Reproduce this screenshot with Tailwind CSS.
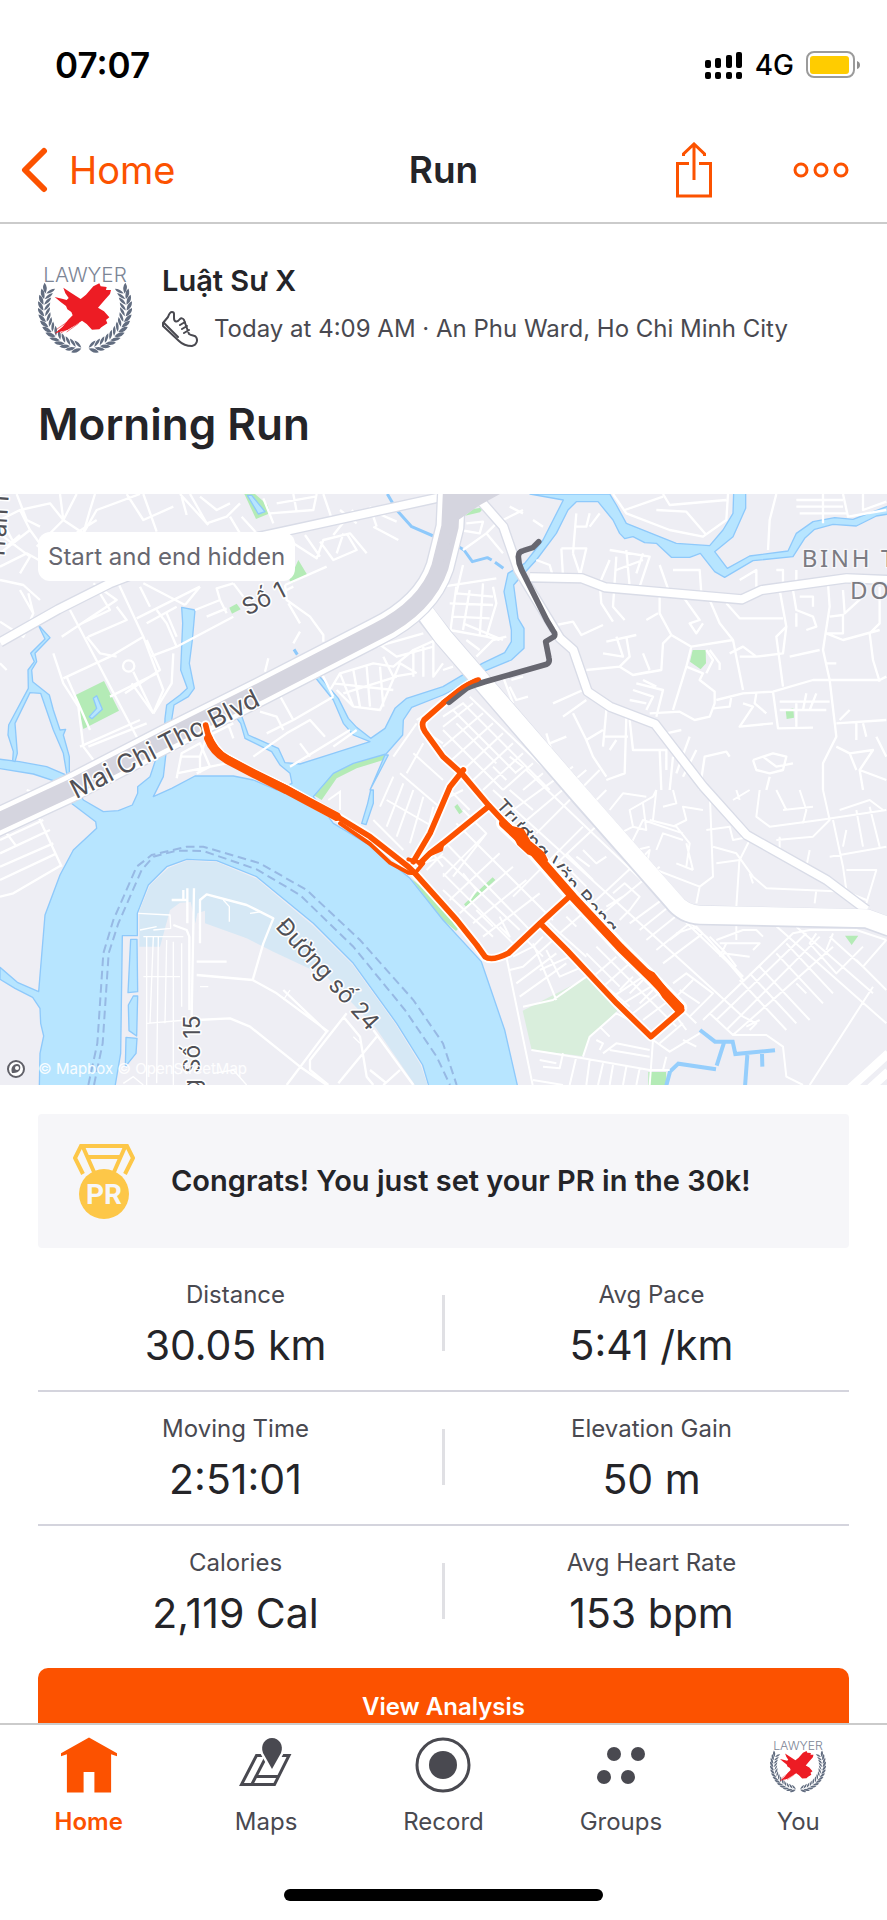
<!DOCTYPE html>
<html lang="en">
<head>
	<meta charset="UTF-8" />
	<meta name="viewport" content="width=device-width, initial-scale=1.0" />
	<title>Run</title>
	<script src="https://cdn.jsdelivr.net/npm/@tailwindcss/browser@4"></script>
</head>
<body class="h-screen flex flex-col overflow-hidden bg-white font-['Inter','Noto_Sans',sans-serif] text-[#242428]">

	<!-- shared shapes -->
	<svg class="hidden" aria-hidden="true">
		<defs>
			<clipPath id="round"><circle cx="165" cy="165" r="141" /></clipPath>
			<path id="leaf" d="M167 288Q150 284 144 268Q160 270 167 288ZM167 290Q158 308 138 304Q146 289 167 290Z" />
			<g id="branch">
				<use href="#leaf" transform="rotate(6 165 165)" />
				<use href="#leaf" transform="rotate(14 165 165)" />
				<use href="#leaf" transform="rotate(22 165 165)" />
				<use href="#leaf" transform="rotate(30 165 165)" />
				<use href="#leaf" transform="rotate(38 165 165)" />
				<use href="#leaf" transform="rotate(46 165 165)" />
				<use href="#leaf" transform="rotate(54 165 165)" />
				<use href="#leaf" transform="rotate(62 165 165)" />
				<use href="#leaf" transform="rotate(70 165 165)" />
				<use href="#leaf" transform="rotate(78 165 165)" />
				<use href="#leaf" transform="rotate(86 165 165)" />
				<use href="#leaf" transform="rotate(94 165 165)" />
				<use href="#leaf" transform="rotate(102 165 165)" />
				<use href="#leaf" transform="rotate(110 165 165)" />
			</g>
			<symbol id="avatar" viewBox="24 24 282 282">
				<g clip-path="url(#round)">
					<text x="165" y="91" text-anchor="middle" font-family="Inter, sans-serif" font-weight="300" font-size="62" fill="#7c8595">LAWYER</text>
				</g>
				<g fill="#626d80">
					<use href="#branch" />
					<use href="#branch" transform="translate(330 0) scale(-1 1)" />
				</g>
				<path fill="#ed1c24" d="M100 107L125 124L152 141L168 128L190 103L208 94L212 103L230 105L228 114L243 114L240 126L222 146L204 167L222 178L238 196L228 204L232 214L214 226L208 232L186 233L170 216L156 206L138 218L112 234L96 238L76 244L98 224L114 204L128 190L124 180L112 172L108 162L92 150L74 135L96 140L110 144L116 138L106 124Z" />
				<path stroke="#ed1c24" stroke-width="3" fill="none" opacity=".6" d="M80 232L120 204M92 243L140 214M110 240L146 214M76 244L112 216" />
			</symbol>
		</defs>
	</svg>

	<!-- status bar -->
	<div class="shrink-0 h-[118px] pt-3 pl-[55px] pr-[27px] flex items-center justify-between text-black">
		<span class="text-[35px] font-semibold">07:07</span>
		<div class="flex items-center gap-3">
			<svg class="w-[38px] h-7" viewBox="0 0 38 28">
				<rect x="0" y="9" width="6" height="8" rx="2" /><rect x="10" y="7" width="6" height="10" rx="2" /><rect x="21" y="4" width="6" height="13" rx="2" /><rect x="31" y="1" width="6" height="16" rx="2" />
				<rect x="0" y="21" width="6" height="7" rx="2" /><rect x="10" y="21" width="6" height="7" rx="2" /><rect x="21" y="21" width="6" height="7" rx="2" /><rect x="31" y="21" width="6" height="7" rx="2" />
			</svg>
			<span class="text-[28px] font-medium leading-7">4G</span>
			<svg class="w-[54px] h-7" viewBox="0 0 54 28">
				<rect x="1" y="1" width="47" height="25" rx="7" fill="none" stroke="#9b9b9b" stroke-width="2" />
				<rect x="4" y="5" width="39" height="18" rx="3" fill="#ffcc00" />
				<path d="M51 10Q54 11 54 14Q54 17 51 18Z" fill="#8f8f8f" />
			</svg>
		</div>
	</div>

	<!-- navigation bar -->
	<header class="shrink-0 h-[106px] px-5 grid grid-cols-3 items-center border-b-2 border-[#cbcbcb]">
		<a href="#" class="flex items-center gap-[21px] text-[38px] text-[#fc5200]">
			<svg class="w-7 h-12" viewBox="0 0 28 48" fill="none" stroke="#fc5200" stroke-width="6" stroke-linecap="round" stroke-linejoin="round"><path d="M24 5L5 24L24 43" /></svg>
			Home
		</a>
		<h1 class="text-center text-[37px] font-semibold">Run</h1>
		<div class="flex items-center justify-end gap-20 pr-[18px]">
			<button type="button" aria-label="Share">
				<svg class="w-[38px] h-14" viewBox="0 0 38 56" fill="none" stroke="#fc5200" stroke-width="3"><path d="M14 21.500H2.500V54H35.500V21.500H24M19 38V3M8.500 14V12L19 2L29.500 12V14" /></svg>
			</button>
			<button type="button" aria-label="More">
				<svg class="w-14 h-4" viewBox="0 0 56 16" fill="none" stroke="#fc5200" stroke-width="3"><circle cx="8" cy="8" r="6" /><circle cx="28" cy="8" r="6" /><circle cx="48" cy="8" r="6" /></svg>
			</button>
		</div>
	</header>

	<main class="flex-1 min-h-0 overflow-hidden">
		<section class="px-[38px] pt-9">
			<div class="flex items-center gap-[30px]">
				<svg class="w-[94px] h-[94px] shrink-0"><use href="#avatar" /></svg>
				<div>
					<p class="text-[29px] leading-8 font-semibold">Luật Sư X</p>
					<div class="mt-3 flex items-center gap-4 text-[24px] leading-10 text-[#494950]">
						<svg class="w-9 h-9" viewBox="0 0 36 36" fill="none" stroke="#494950" stroke-width="2" stroke-linejoin="round" stroke-linecap="round">
							<path d="M10 1C8 1 7 3 6 6L1 12V15L17 30C20 33 24 35 30 35C35 34 36 29 34 26C33 24 30 25 27 23L22 9C21 7 19 7 18 8C15 12 12 11 12 7V3C12 2 11 1 10 1ZM2 12L16 26M18 14L23 11M20 18L25 15M22 22L27 19" />
						</svg>
						<span>Today at 4:09 AM · An Phu Ward, Ho Chi Minh City</span>
					</div>
				</div>
			</div>
			<h2 class="mt-10 pb-10 text-[44px] leading-[60px] font-semibold">Morning Run</h2>
		</section>

		<!-- route map, drawn in four quarters -->
		<div class="relative">
			<svg class="block w-full h-auto" viewBox="0 12 2661 1773" role="img" aria-label="Route map">
				<rect y="12" width="2661" height="1773" fill="#eeeef4" />

				<!-- parks -->
				<g fill="#b4ebb6">
					<path d="M733 12H765L803 45L810 70L768 87ZM895 210L922 255L875 280L868 270ZM688 353L710 341L722 358L696 371ZM227 615L312 573L357 662L250 717ZM1160 790L1060 820L1000 850L940 915L965 930L1010 865L1070 835L1150 810Z" />
					<path d="M1395 77L1420 57L1452 52L1440 67ZM2078 480H2117L2118 520L2102 538L2070 515ZM2357 660L2380 655L2382 683L2360 687Z" />
					<path d="M1363 950L1372 942L1388 965L1378 973ZM1392 1243L1478 1162L1486 1170L1398 1250ZM2535 1337H2575L2555 1365ZM1945 1746H1998L2000 1785H1945Z" />
					<path d="M1232 1165L1258 1185L1380 1310L1368 1323L1329 1290Z" />
				</g>
				<path fill="#d9eedc" d="M1568 1562L1765 1461L1852 1562L1770 1640L1750 1699L1595 1680Z" />

				<!-- water -->
				<g fill="#b7e5ff" stroke="#8ec9fb" stroke-width="4" stroke-linejoin="round">
					<path d="M118 1790L120 1690L131 1638L122 1600L120 1555L98 1522L45 1495L0 1468V1432L52 1477L116 1505L135 1275L180 1155L220 1080L290 1015L287 995L212 938L185 880L100 852L-5 835V807L58 815L140 830L210 860L250 930L310 965L355 962L397 945L413 910L413 890L450 860L470 800L493 760L495 685L500 645L540 615L562 595L542 540L548 400L545 352L585 360L577 450L568 520L583 595L565 620L522 645L515 690L498 790L490 860L460 920L515 895L585 858H700L760 870L830 900L876 880L870 850L840 825L815 785L735 745L722 700L708 682L725 678L745 735L835 775L855 818L900 822L1000 790L1110 755L1060 735L1030 700L1000 630L940 555L955 555L1015 625L1045 685L1070 712L1112 745L1155 715L1185 655L1220 625L1329 590L1447 520L1514 488L1534 455V420L1512 305L1524 250L1574 220L1629 150L1690 30L1590 12H1829L1849 45L1879 100L2029 160L2129 167L2169 120L2199 70L2201 8H2237V55L2199 140L2144 185L2182 235L2249 198L2364 183L2389 130L2439 95L2504 83L2559 88L2665 48V72L2629 78L2569 108L2499 103L2444 118L2414 145L2379 200L2259 212L2174 262L2144 245L2101 190L2069 202H2014L1969 160L1934 158L1899 140L1874 146L1859 130L1839 90L1794 35H1729L1704 60L1669 130L1609 210L1554 270L1541 285L1554 385L1572 415V475L1534 510L1449 545L1389 585L1329 615L1235 652L1210 690L1208 735L1158 792L1060 820L1000 850L940 920L1000 1000L1100 1060L1230 1165L1329 1290L1444 1415L1514 1620L1553 1790H1287L1268 1725L1190 1600L1060 1420L940 1300L770 1160L650 1112L560 1108L500 1130L445 1185L412 1270V1337H367L362 1690L345 1790Z" />
					<path d="M115 405L150 443L105 490L110 515L95 540L98 575L148 615L160 660L180 720L197 718L190 735L208 800V850L200 850L190 790L160 720L122 610L90 608L45 700L52 790L45 815L38 812L40 785L24 735L26 705L85 595L84 540L103 515L92 490L135 447Z" />
					<path d="M1162 12L1190 60L1235 110L1300 138M1372 168L1392 180L1417 215L1462 203L1475 210M1485 217L1510 235M882 478L892 494" fill="none" stroke-width="9" />
					<path d="M1155 795L1110 900L1165 795ZM1112 900L1103 940L1085 1000L1098 1004L1120 940V900Z" />
					<path d="M290 617L307 658L276 686L268 680L290 655L280 625ZM742 16L775 72L795 65L755 16Z" />
					<path d="M392 1348H411L413 1505L384 1508ZM400 1518H413L410 1638L387 1622L385 1545ZM378 1642L411 1645L408 1690L376 1730Z" />
				</g>
				<path fill="none" stroke="#95cefc" stroke-width="12" d="M2100 1620L2145 1655H2198L2206 1692L2325 1681M2242 1695L2235 1790M2286 1692L2287 1730M2172 1658L2150 1727M2148 1738L2035 1721L2010 1745L1998 1790" />
				<!-- river shallows -->
				<path fill="#d6e8f5" d="M418 1370V1262L450 1185L505 1134L560 1112L650 1116L770 1166L940 1308L1058 1424L1185 1600L1262 1725L1283 1785H1245L1125 1610L980 1460L820 1385L740 1345L615 1300V1262L592 1270L586 1300L572 1236L540 1238L510 1260L480 1370Z" />
				<!-- ferry lines -->
				<g fill="none" stroke="#97b9e4" stroke-width="6" stroke-dasharray="26 14">
					<path d="M265 1785L292 1660L310 1390L340 1290L410 1130L455 1095L560 1070L610 1070L780 1120L920 1200L1080 1350L1240 1530L1329 1660L1370 1785" />
					<path d="M282 1785L308 1660L326 1390L355 1300L425 1140L460 1100L530 1082L610 1083L770 1138L900 1215L1060 1370L1215 1560L1310 1700L1350 1785" />
				</g>

				<!-- side streets -->
				<g fill="none" stroke="#ffffff" stroke-width="7" stroke-linejoin="round">
					<path d="M0 90L60 60L150 40L190 90L230 12M0 190L90 120L60 60M10 140L90 200L60 250M0 230L80 190L170 240M110 170L190 90L250 130L290 60L420 12M250 130L270 60L285 12M180 12L190 90M90 120L130 175M0 270L70 285L120 330M50 12L80 90L120 110M20 170L60 135M10 100L45 165M150 180L290 90M380 12L430 90L520 50M430 12L470 125M540 12L625 105M545 20L560 75M570 12L620 100L680 80L720 40M600 20L650 60L690 40M690 80L720 130M725 80L770 130M810 70L940 60L950 12M830 40L945 20M880 12L890 65M820 100L790 25M970 12L1000 100M915 135L960 200M880 160L950 205L970 150L1050 130L1100 190M960 155L1000 210L1070 180L1040 130M985 95L1110 60L1190 95M1000 135L1060 60M1010 190L1030 130M1020 60L1070 100M1120 110L1195 150M1110 50L1130 110" />
					<path d="M0 395L70 440L100 370L85 310M60 300L100 370M0 520L20 540M210 360L415 750M185 440L350 330L280 280M245 400L330 360L300 310M265 440L380 390L350 350M355 280L430 440L490 600L460 670M410 385L600 290M420 290L450 350M430 280L555 345M395 580L460 670M190 565L330 500L430 440M200 560L270 720M160 490L190 580L235 650L250 770L280 810M330 620L470 550M375 610L480 540L440 450M260 440L300 490L350 500M450 500L530 470L700 380M530 470L500 400L470 360M440 400L530 350M500 370L530 440M600 290L555 345M585 360L660 330L650 295L700 280M620 380L680 355M660 330L680 370M700 280L730 320M855 285L980 230M855 285L860 330L930 380L970 435V455M865 340L900 400M880 460L900 425M795 545L805 505M860 300L880 290" />
					<circle cx="386" cy="528" r="17" />
					<path d="M400 545L460 670M520 490L515 580L460 670M240 770L420 690M265 770L440 700M540 690L570 680M530 865L545 790L600 760L630 830L590 850M545 800L600 800V850M530 850L680 820M600 800L620 740L700 700M680 690L700 745M830 600L880 690L800 730M780 665L830 680L850 720M880 690L1000 620M760 800L860 730L930 690L975 740M870 830L1050 720M900 760L930 800M1000 770L1070 720M960 540L1000 620" />
					<path d="M990 600L1020 550L1120 520L1180 530L1240 480L1329 440M1060 650L1140 660L1170 590L1200 520L1250 550M1000 580L1180 600M1010 600L1060 650M1020 550L1060 650M1060 540L1080 650M1100 530L1110 650M1140 530L1150 650M1030 610L1190 560M1240 480V560M1270 470V560M1300 450V560L1329 520M1120 450L1190 500L1300 470M1130 470L1270 430M1150 500L1180 560L1240 550" />
				</g>
				<g transform="translate(1329 0)" fill="none" stroke="#ffffff" stroke-width="7" stroke-linejoin="round">
					<path d="M510 12L550 70L680 120L780 140L850 90L855 12M545 60L660 20M660 12L680 45L850 30M640 60L730 65L790 135M1000 12L980 90L975 180M1060 30H1200M1060 50H1200M1070 70H1210M1140 12V100M1200 12L1215 80L1330 60M1260 12V60L1330 35M400 70L390 190M440 70L430 110H400M470 70L440 110M355 175H430L410 260M355 175L360 260M390 190L420 280M500 180L620 200L590 290M520 200L510 350L545 390M550 180L560 290M600 190L580 250M500 210L470 280L475 340L510 395M520 240L600 210M650 225L680 310M690 240L770 240L775 310M890 270L940 240V290M1000 240H1020V300M1060 240V290" />
					<path d="M0 290L160 265M40 290L20 440M60 225L40 310L150 320M20 340L150 345M30 380L140 385M20 420L130 440M120 280L110 440M80 300L60 420M150 290L160 340L130 440L170 450M60 400L180 450M70 100L120 95L110 130L50 120M60 180L130 130L160 100M130 130L180 190M180 90L240 60M200 50L240 70M270 90L300 110M280 210L320 225L330 260M100 500L150 450L190 440M70 450L110 480M0 540L30 530" />
					<path d="M340 405L390 395L415 435L480 405M490 455L580 435M520 440L540 500L480 490M650 320V370L685 435L660 460L655 540L570 555L530 530L430 540M530 530L560 500L550 440M570 555L620 545M600 490L620 540M645 370L610 390M685 435L745 470L870 450L900 600M720 320L770 390L740 400L760 430L780 400M800 330L830 400L870 450M850 340L890 385H1020M745 470L730 530L690 660M730 530L780 550L770 570L815 605V640L800 680L755 690L710 665L620 670M800 480L830 520V540M790 480L810 510L790 550M820 630L900 610L990 605L1110 570H1310L1330 560M810 655L860 650L865 620M990 605L1005 715L1110 713M1010 635H1160M1010 660H1150M1090 610L1080 660M1060 640V710M1120 610L1100 660M940 610L935 640L970 670M900 640L930 650L890 710L990 700" />
					<path d="M1010 300L1030 410L1020 490L940 500M1030 410L1000 440L1020 590M1050 300L1060 360L1110 380L1120 410L1090 420M1060 370V410M1155 280L1160 350L1140 480L1160 570L1180 740L1170 760L1140 820L1140 900M1070 320H1110V350M1160 380L1200 375V430L1150 430L1200 450L1310 420M1200 300L1205 370L1260 320V290M1310 290V400L1280 430L1290 510L1310 575M1150 520H1180M1040 500L1130 480M890 500L940 500L900 470L860 490M1180 700L1330 690M1240 700V750M1190 690L1220 660M1260 700L1270 740M1180 770L1220 790L1240 840M1300 740L1330 800M1220 790L1290 780L1250 840L1330 870M1250 840L1260 900" />
					<path d="M200 590L220 630L255 620M205 570L240 560M180 560L210 640M330 640L420 600M360 680L430 630M390 670L430 750L480 720M430 750L450 800L490 860M490 660L480 770M550 680L545 850L490 870M480 740H555M560 690L570 780H670V840M500 780L520 750M570 600L630 620L610 660M580 580L660 600L640 680M560 630L610 640M600 570L640 590M670 730L715 720M650 780L655 900M690 800L680 900M740 740L700 850M760 780L720 860M770 900L785 800L850 785L860 800M930 810L940 840L980 850L1020 840L1030 800L990 790L930 810M960 800L1000 830L1050 820M980 860L970 900M320 760L370 740M310 730L325 780" />
				</g>
				<!-- blocks south of the avenue -->
				<g transform="translate(1329 0)" fill="none" stroke="#ffffff" stroke-width="6">
					<path d="M0 680L60 640L320 900M0 720L180 900M30 660L220 850M80 620L330 860M90 640L0 710M120 670L0 770M150 700L20 815M180 730L50 850M210 760L80 880M240 790L120 900M270 820L180 900M300 850L240 900M40 700L110 770M100 760L160 820M150 830L190 870M200 800L240 830L215 850" />
				</g>
				<g fill="none" stroke="#ffffff" stroke-width="6">
					<path d="M1329 640L1250 690M1270 720L1329 760M1200 850L1329 960M1160 930L1290 1005M1180 860L1140 950M1210 880L1160 1010M1240 900L1190 1040M1270 920L1230 1060M1300 950L1270 1080M1240 790L1329 870M1270 760L1220 850M1180 800L1250 700M1290 1080L1329 1130M1270 1120L1329 1100M1120 990L1210 1080M985 930L1020 905V960M1280 1140L1329 1090" />
				</g>
				<g transform="translate(1329 900)" fill="none" stroke="#ffffff" stroke-width="6" stroke-linejoin="round">
					<path d="M150 0L900 680M200 0L270 60M250 -60L900 560M330 -40L540 180M0 30L60 0M20 0L80 60M40 100L330 390M0 150L270 430M0 200L230 420M0 250L210 460M0 300L150 440M60 60L130 130L0 260M130 130L30 260M170 190L20 330M210 230L50 370M250 270L90 400M290 310L120 440M210 60L390 -70M240 100L430 -60M280 130L470 -60M210 320L420 110M320 240L480 90M370 190L450 270M350 210L430 290M420 180L460 220L490 200M400 200L440 230M450 340L600 200M480 370L650 230M510 310L545 280L590 320L560 360L530 390M490 350L540 320M590 420L690 340M560 400L670 320M610 450L710 370M640 480L740 400M660 520L780 430" />
					<path d="M430 490L530 590M460 470L700 710M490 440L760 700M420 530L560 650M450 560L520 500M480 590L560 520M510 620L600 560M540 640L640 580M570 670L660 600M600 690L680 630M530 600L570 560M590 640L630 600M560 610L600 570M690 580L730 550L810 610L740 680M710 600L770 640M750 570L700 620M360 350L390 330L420 370L350 430L310 390M340 420L430 500M370 380L400 410M240 440L300 500M100 360L150 410M170 410L200 440L170 380M60 250L100 300L80 330" />
					<path d="M190 500L270 890M210 500L270 470L300 440M200 540L240 530L330 450M220 580L340 490M230 620L370 520M240 650L330 630L430 560M270 460L340 630M310 480L350 560L420 530M290 540L380 500L350 460M265 780L420 805L620 840L680 840M270 870L360 885M300 830L350 835L360 790M400 800L380 885M440 810L430 885M480 820L465 885M510 825L500 885M550 830L540 885M590 835L580 885M290 810L340 820M420 800L440 740L520 670L560 690L620 740L630 750L620 885M470 710L500 740M470 780L480 760L460 750M480 790L520 760L620 780M500 780L620 800M630 750L680 785L770 730M670 800L660 840M650 760L720 700M700 680L730 720M720 750L760 770" />
					<path d="M780 690L1050 430L1100 420H1240L1330 450M820 690L1090 430M850 720L1130 440M870 735L1170 470M800 670L870 735H970L1020 770L1030 860L1080 885M890 570L1030 720M920 550L1060 700M950 530L1100 690M990 400L1330 700M1060 410L1290 610M1000 490L1140 640M1030 460L1170 610M1060 580L1090 610M900 680L940 700L920 720M910 710L950 690M1100 885L1290 590M1120 430L1100 460L1180 550L1260 470M1170 430L1150 480M1160 440L1260 530L1330 450M1240 510L1330 600M820 450L900 420H940L960 440M830 460H950L930 480M840 490L920 500M800 440L850 490L880 530M880 400V450M850 460L830 500M700 430L760 410L900 560M680 450L720 420M730 390L790 440L900 570" />
				</g>
				<g transform="translate(1329 900)" fill="none" stroke="#ffffff" stroke-width="6" stroke-linejoin="round">
					<path d="M460 30L490 0M500 60L540 10L610 20M530 130L570 110L560 60L630 20L640 0M570 110L610 120L600 40M630 90L640 0M620 90L700 110L740 160L730 230M560 170L600 90L720 130M640 180L660 130L720 150M580 180L620 170M600 200L620 180L610 230M640 240L770 290L810 260L800 0M770 290L760 340M690 110L730 90L720 50L780 60M730 160L750 240M750 240L700 220M790 120L860 110L870 150L920 140M810 170L880 190L930 260L970 295L1210 305L1270 330M820 220L890 210L920 150M890 200L880 350M1120 300L1115 340M920 250L930 280M870 30L920 0M950 0L940 80L980 110L1130 90L1330 60M1000 150L1110 140L1160 90L1140 0M1170 90L1200 230L1210 300M1100 180L1090 230M1010 180V140M1160 200L1330 170M1210 120L1200 170M1240 60L1260 170M1280 50L1310 170M1190 60L1280 30L1320 60M1070 0L1090 60L1080 100M1000 0L1030 60M880 0L890 30M690 0L700 40L660 50M1020 60L1110 50M1210 240L1300 240L1270 340" />
				</g>
				<g transform="translate(0 900)" fill="none" stroke="#ffffff" stroke-width="7" stroke-linejoin="round">
					<path d="M0 150L130 90M0 190L150 120M0 230L160 160M0 270L170 190M0 320L40 310L185 225M115 80L185 230M20 130L50 170M70 40L110 10L80 0M550 330V300M582 295L575 680M562 295V400M515 330H565M520 405L560 420L568 440V660M600 460V330L620 313L740 345L820 385L790 460L758 570L590 555M590 515H680M758 570L830 610L985 725M850 600L980 725L860 885M590 690L690 685L750 710L900 830L980 885M1040 670L930 810L930 840L985 885M1030 680L1080 740L1100 860L1120 885M1120 720L1240 885M1130 740L1015 880M1200 840L1150 885M1110 840L1160 880" />
					<path d="M430 440H550M440 440V885M460 440L450 700M475 440L470 880M500 450L495 700M520 455V885M545 460V650M430 560H540M440 700L560 690M415 370L510 375L512 415L460 420M420 420L470 410M670 330L688 350V395M750 370L785 365M640 850L700 840L740 885M370 880L400 860L430 885M600 590H625M870 600L850 630M1060 740L1080 760" stroke-width="4" />
				</g>

				<!-- main roads -->
				<g fill="none" stroke-linejoin="round">
					<path stroke="#d9dce7" stroke-width="32" d="M0 457L175 358L330 280L590 180L880 118L1329 20M1440 30L1510 110L1555 240L1680 445L1720 480L1763 605L1830 650L1965 702L2110 890L2240 1035L2480 1170L2600 1260M1590 262L1745 265L1815 292L2225 328L2285 300L2540 265L2665 270" />
					<path stroke="#ffffff" stroke-width="24" d="M0 457L175 358L330 280L590 180L880 118L1329 20M1440 30L1510 110L1555 240L1680 445L1720 480L1763 605L1830 650L1965 702L2110 890L2240 1035L2480 1170L2600 1260M1590 262L1745 265L1815 292L2225 328L2285 300L2540 265L2665 270" />
					<path stroke="#d9dce7" stroke-width="60" d="M1270 364L1329 440L1745 924L2020 1236Q2050 1274 2100 1276L2600 1287L2670 1312" />
					<path stroke="#ffffff" stroke-width="54" d="M1270 360L1329 440L1745 920L2020 1232Q2050 1272 2100 1274L2600 1285L2670 1310" />
					<path stroke="#ffffff" stroke-width="26" d="M2550 1795L2665 1690M2610 1795L2665 1745" />
					<path stroke="#d9dce7" stroke-width="88" d="M-20 1002L210 895L500 745L780 605L1130 425Q1280 350 1320 230L1350 110L1355 0" />
					<path stroke="#ffffff" stroke-width="80" d="M-20 1002L210 895L500 745L780 605L1130 425Q1280 350 1320 230L1350 110L1355 0" />
					<path stroke="#d5d5df" stroke-width="52" d="M-20 1002L210 895L500 745L780 605L1130 425Q1280 350 1320 230L1350 110L1355 0" />
					<path fill="#d5d5df" d="M1329 12H1500L1440 45L1375 90L1329 215Z" />
				</g>

				<!-- street names -->
				<g fill="#505056" stroke="#ffffff" stroke-width="9" paint-order="stroke" stroke-linejoin="round" font-size="78">
					<text transform="translate(228 928) rotate(-27)">Mai Chi Tho Blvd</text>
					<text transform="translate(742 378) rotate(-27)" font-size="70">Số 1</text>
					<text transform="translate(824 1312) rotate(48)" font-size="70">Đường số 24</text>
					<text transform="translate(600 1810) rotate(-90)" font-size="68">g Số 15</text>
					<text transform="translate(12 214) rotate(-86)" font-size="74">Trần N</text>
					<text transform="translate(1478 952) rotate(48)" font-size="64">Trương Văn Bang</text>
				</g>
				<g fill="#7b7b82" stroke="#f7f7fa" stroke-width="8" paint-order="stroke" font-size="72" font-family="'Noto Sans', sans-serif">
					<text x="2405" y="230" letter-spacing="8">BINH T</text>
					<text x="2550" y="326" letter-spacing="8">DONG</text>
				</g>

				<!-- recorded route -->
				<g fill="none" stroke-linecap="round" stroke-linejoin="round">
					<path stroke="#ffffff" stroke-width="28" d="M617 705Q625 755 665 795L750 842L860 895L1020 985L1110 1040L1225 1130L1245 1150L1370 1290L1430 1365L1455 1400Q1475 1415 1525 1390L1620 1300L1710 1218M1620 1300L1700 1380L1850 1540L1953 1640L2045 1560M1240 1115L1290 1030L1350 890L1390 840M1260 1120L1290 1090L1329 1060L1465 950M1435 570Q1410 575 1329 640L1272 690Q1262 705 1275 725L1329 800L1385 850L1465 945L1720 1220L2045 1560" />
					<path stroke="#ffffff" stroke-width="44" d="M1510 1000L1600 1085L1720 1222L1860 1372L1960 1470L2040 1553" />
					<path stroke="#fc5200" stroke-width="17" d="M617 705Q625 755 665 795L750 842L860 895L1020 985L1110 1040L1225 1130L1245 1150L1370 1290L1430 1365L1455 1400Q1475 1415 1525 1390L1620 1300L1710 1218M1620 1300L1700 1380L1850 1540L1953 1640L2045 1560M1240 1115L1290 1030L1350 890L1390 840M1260 1120L1290 1090L1329 1060L1465 950M1435 570Q1410 575 1329 640L1272 690Q1262 705 1275 725L1329 800L1385 850L1465 945L1720 1220L2045 1560" />
					<path stroke="#fc5200" stroke-width="12" d="M1020 1000L1110 1062L1170 1118L1225 1148L1245 1150L1270 1120L1225 1108" />
					<path stroke="#fc5200" stroke-width="26" d="M625 745Q640 785 680 808L760 850L860 900L1010 980M1510 1000L1600 1085L1720 1222L1860 1372L1960 1470L2040 1553" />
					<path fill="#fc5200" stroke="#fc5200" stroke-width="8" d="M1530 1010L1568 1020L1588 1055L1630 1090L1640 1110L1585 1090L1555 1062ZM1290 1095L1305 1078L1329 1062L1325 1080ZM1940 1440L1960 1450L2000 1500L2048 1550L2044 1564L2030 1564L1990 1520Z" />
					<path stroke="#676770" stroke-width="17" d="M1347 637L1400 595Q1420 585 1455 575L1640 523Q1650 518 1647 505L1637 455L1662 440Q1668 432 1658 420L1640 390L1565 240Q1555 220 1555 200Q1555 185 1570 182L1598 173L1616 155" />
					<path stroke="#fc5200" stroke-width="12" d="M1433 570Q1405 578 1375 600L1329 637" />
				</g>
			</svg>

			<span class="absolute left-[38px] top-[38px] px-[10px] rounded-xl bg-white text-[24px] leading-[49px] text-[#676770]">Start and end hidden</span>
			<div class="absolute left-[6px] bottom-[6px] flex items-center gap-3 text-[15px] leading-5 text-white/90">
				<svg class="w-5 h-5" viewBox="0 0 20 20"><circle cx="10" cy="10" r="8" fill="#ffffff" stroke="#606068" stroke-width="2" /><path d="M6 14C4 8 8 5 11 5C15 5 15 10 13 12C11 14 8 14 6 14Z" fill="#606068" /><circle cx="11" cy="9" r="2" fill="#ffffff" /></svg>
				<span>© Mapbox © OpenStreetMap</span>
			</div>
		</div>

		<section class="px-[38px] pt-[29px]">
			<div class="h-[134px] pl-[35px] flex items-center gap-9 rounded bg-[#f6f6f9]">
				<svg class="w-[62px] h-[75px]" viewBox="0 0 62 75">
					<path fill="none" stroke="#fdc748" stroke-width="4" d="M10 30L2 14L8 2H54L60 14L52 30M10 3L21 28M52 3L41 28M15 13H47" />
					<circle cx="31" cy="50" r="25" fill="#fdc748" />
					<text x="31" y="60" text-anchor="middle" font-family="Roboto, sans-serif" font-weight="700" font-size="28" fill="#f6f6f9">PR</text>
				</svg>
				<p class="text-[29px] leading-10 font-semibold">Congrats! You just set your PR in the 30k!</p>
			</div>

			<!-- stats -->
			<div class="pt-[10px] text-center">
				<div class="grid grid-cols-[1fr_3px_1fr] gap-x-[9px] pt-[17px] pb-[15px] border-b-2 border-[#d4d4dd]">
					<dl>
						<dt class="text-[24px] leading-10 text-[#494950]">Distance</dt>
						<dd class="text-[41px] leading-[60px]">30.05 km</dd>
					</dl>
					<div class="h-14 mt-5 bg-[#e0e0e4]"></div>
					<dl>
						<dt class="text-[24px] leading-10 text-[#494950]">Avg Pace</dt>
						<dd class="text-[41px] leading-[60px]">5:41 /km</dd>
					</dl>
				</div>
				<div class="grid grid-cols-[1fr_3px_1fr] gap-x-[9px] pt-[17px] pb-[15px] border-b-2 border-[#d4d4dd]">
					<dl>
						<dt class="text-[24px] leading-10 text-[#494950]">Moving Time</dt>
						<dd class="text-[41px] leading-[60px]">2:51:01</dd>
					</dl>
					<div class="h-14 mt-5 bg-[#e0e0e4]"></div>
					<dl>
						<dt class="text-[24px] leading-10 text-[#494950]">Elevation Gain</dt>
						<dd class="text-[41px] leading-[60px]">50 m</dd>
					</dl>
				</div>
				<div class="grid grid-cols-[1fr_3px_1fr] gap-x-[9px] pt-[17px] pb-[15px]">
					<dl>
						<dt class="text-[24px] leading-10 text-[#494950]">Calories</dt>
						<dd class="text-[41px] leading-[60px]">2,119 Cal</dd>
					</dl>
					<div class="h-14 mt-5 bg-[#e0e0e4]"></div>
					<dl>
						<dt class="text-[24px] leading-10 text-[#494950]">Avg Heart Rate</dt>
						<dd class="text-[41px] leading-[60px]">153 bpm</dd>
					</dl>
				</div>
			</div>

			<button type="button" class="mt-[10px] w-full h-[78px] rounded-[10px] bg-[#fc5200] text-white text-[24px] font-semibold">View Analysis</button>
		</section>
	</main>

	<!-- tab bar -->
	<nav class="relative z-10 shrink-0 h-[197px] flex flex-col justify-between items-center pb-[19px] border-t-2 border-[#cbcbcb] bg-white text-[24px] leading-10 text-[#494950]">
		<div class="w-full pt-3 grid grid-cols-5">
			<a href="#" class="flex flex-col items-center gap-[9px] font-semibold text-[#fc5200]">
				<svg class="w-14 h-14" viewBox="0 0 57 56" fill="#fc5200"><path d="M28.500 0L57 16V19L51 17V56H34V35H23V56H6V17L0 19V16Z" /></svg>
				Home
			</a>
			<a href="#" class="flex flex-col items-center gap-[9px]">
				<svg class="w-14 h-14" viewBox="0 0 56 56" fill="none" stroke="#494950" stroke-width="3">
					<path d="M18.500 18.500H51L36.500 47.500H3.500ZM28 20L14 47M18 39.500H40" />
					<path d="M34 32L25 16C22 8 27 1 34 1C41 1 46 8 43 16Z" fill="#494950" stroke="#ffffff" stroke-width="5" paint-order="stroke" />
				</svg>
				Maps
			</a>
			<a href="#" class="flex flex-col items-center gap-[9px]">
				<svg class="w-14 h-14" viewBox="0 0 56 56"><circle cx="28" cy="28" r="26" fill="none" stroke="#494950" stroke-width="3" /><circle cx="28" cy="28" r="14" fill="#494950" /></svg>
				Record
			</a>
			<a href="#" class="flex flex-col items-center gap-[9px]">
				<svg class="w-14 h-14" viewBox="0 0 56 56" fill="#494950"><circle cx="21" cy="17" r="7" /><circle cx="45" cy="17" r="7" /><circle cx="11" cy="40" r="7" /><circle cx="35" cy="40" r="7" /></svg>
				Groups
			</a>
			<a href="#" class="flex flex-col items-center gap-[9px]">
				<svg class="w-14 h-14"><use href="#avatar" /></svg>
				You
			</a>
		</div>
		<div class="w-[36%] h-3 rounded-full bg-black"></div>
	</nav>
</body>
</html>
